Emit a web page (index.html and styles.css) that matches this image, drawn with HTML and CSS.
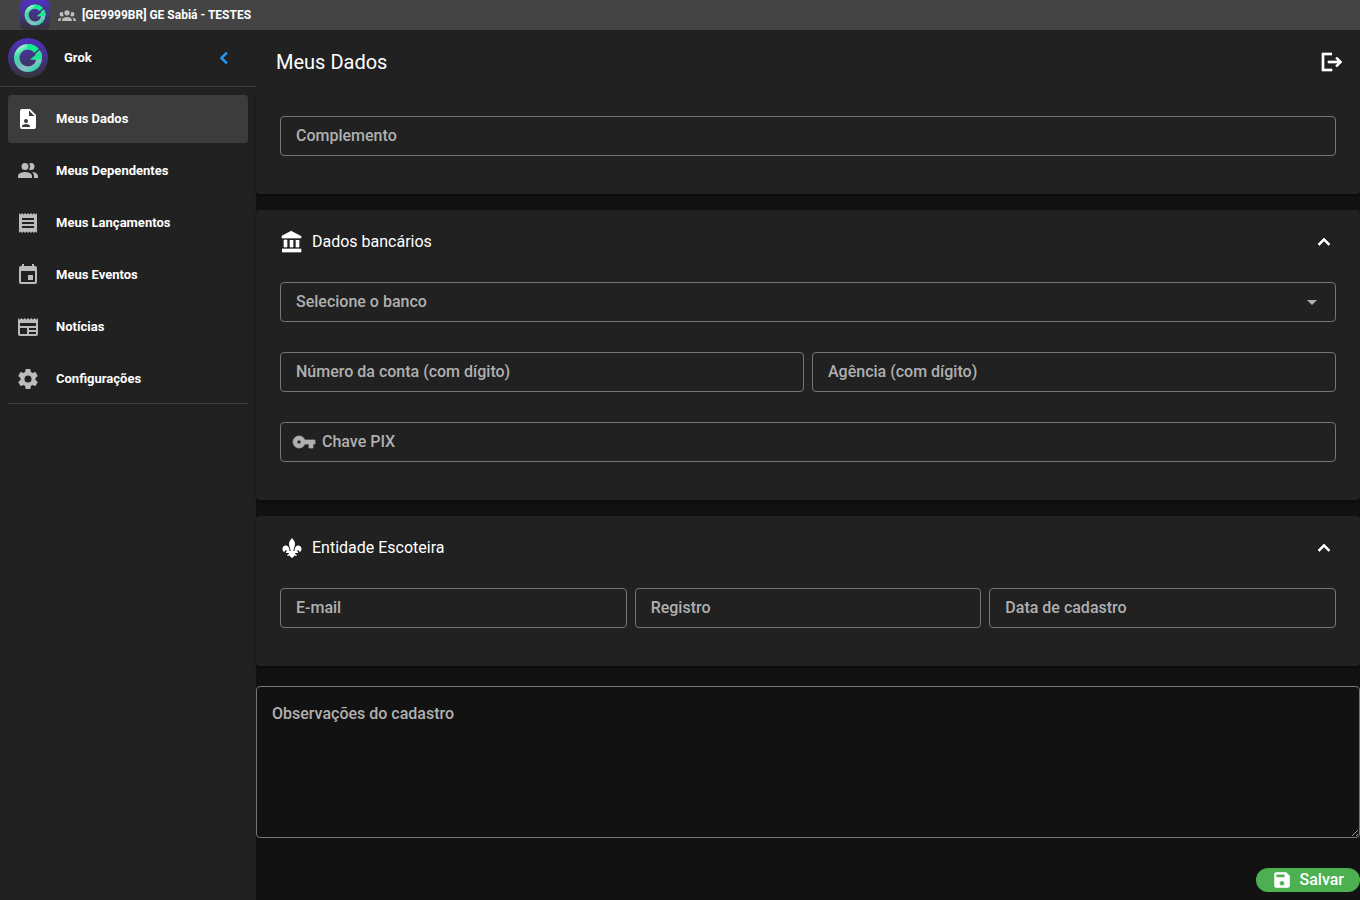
FILE: index.html
```html
<!DOCTYPE html>
<html lang="pt-BR">
<head>
    <meta charset="UTF-8">
    <meta name="viewport" content="width=device-width, initial-scale=1.0">
    <title>Meus Dados</title>
    <link rel="stylesheet" href="styles.css">
</head>
<body>
    <!-- Shared logo -->
    <svg class="defs" aria-hidden="true">
        <defs>
            <linearGradient id="logoBg" x1="0" y1="0" x2="0" y2="1">
                <stop offset="0" stop-color="#5030c0"/>
                <stop offset="0.5" stop-color="#43347f"/>
                <stop offset="1" stop-color="#343338"/>
            </linearGradient>
            <linearGradient id="logoRing" x1="0.1" y1="0.1" x2="0.7" y2="1">
                <stop offset="0" stop-color="#c8f5e6"/>
                <stop offset="0.25" stop-color="#3fe0a0"/>
                <stop offset="0.5" stop-color="#5cc5b0"/>
                <stop offset="0.75" stop-color="#8fc0cc"/>
                <stop offset="1" stop-color="#17dc9a"/>
            </linearGradient>
            <symbol id="logo" viewBox="0 0 40 40">
                <rect width="40" height="40" fill="url(#logoBg)"/>
                <path d="M20 6a14 14 0 1 0 0 28 14 14 0 0 0 0-28m0 5.500a8.500 8.500 0 1 1 0 17 8.500 8.500 0 0 1 0-17" fill="url(#logoRing)" fill-rule="evenodd"/>
                <path d="M19 6a14 14 0 0 1 12 5.500l-4.500 3.500a8 8 0 0 0-7-3.500z" fill="#0cf08c"/>
                <path d="M22 21.500 32.500 13q2 3.500 1.500 8l-6 1z" fill="#1ee596"/>
                <path d="M20 21 33 10" stroke="#40336f" stroke-width="1.500"/>
            </symbol>
        </defs>
    </svg>

    <header class="system-bar">
        <svg class="system-logo" aria-hidden="true"><use href="#logo"/></svg>
        <svg class="system-icon" viewBox="0 0 24 24" aria-hidden="true"><path d="M12 5.500A3.500 3.500 0 0 1 15.500 9 3.500 3.500 0 0 1 12 12.500 3.500 3.500 0 0 1 8.500 9 3.500 3.500 0 0 1 12 5.500M5 8C5.560 8 6.080 8.150 6.530 8.420 6.380 9.850 6.800 11.270 7.660 12.380 7.160 13.340 6.160 14 5 14A3 3 0 0 1 2 11 3 3 0 0 1 5 8M19 8A3 3 0 0 1 22 11 3 3 0 0 1 19 14C17.840 14 16.840 13.340 16.340 12.380 17.200 11.270 17.620 9.850 17.470 8.420 17.920 8.150 18.440 8 19 8M5.500 18.250C5.500 16.180 8.410 14.500 12 14.500S18.500 16.180 18.500 18.250V20H5.500V18.250M0 20V18.500C0 17.110 1.890 15.940 4.450 15.600 3.860 16.280 3.500 17.220 3.500 18.250V20H0M24 20H20.500V18.250C20.500 17.220 20.140 16.280 19.550 15.600 22.110 15.940 24 17.110 24 18.500V20Z"/></svg>
        <span>[GE9999BR] GE Sabiá - TESTES</span>
    </header>

    <div class="layout">
        <aside class="sidebar">
            <div class="profile">
                <svg class="avatar" aria-hidden="true"><use href="#logo"/></svg>
                <span class="profile-name">Grok</span>
                <button class="collapse-btn" type="button" aria-label="Recolher menu">
                    <svg class="icon bold" viewBox="0 0 24 24"><path d="M15.410 16.580 10.830 12l4.580-4.590L14 6l-6 6 6 6z"/></svg>
                </button>
            </div>
            <nav class="menu">
                <a class="menu-item active" href="#dados">
                    <svg class="icon" viewBox="0 0 24 24"><path d="M14 2H6a2 2 0 0 0-2 2v16a2 2 0 0 0 2 2h12a2 2 0 0 0 2-2V8zM10 12a2 2 0 1 1 0 4 2 2 0 0 1 0-4M14 20H6v-1c0-1.330 2.670-2 4-2s4 .670 4 2zM13 9V3.500L18.500 9z"/></svg>
                    <span>Meus Dados</span>
                </a>
                <a class="menu-item" href="#dependentes">
                    <svg class="icon" viewBox="0 0 24 24"><path d="M13.070 10.410a5 5 0 0 0 0-5.820A3.390 3.390 0 0 1 15 4a3.500 3.500 0 0 1 0 7 3.390 3.390 0 0 1-1.930-.59M5.500 7.500A3.500 3.500 0 1 1 9 11a3.500 3.500 0 0 1-3.500-3.500M16 17v2H2v-2s0-4 7-4 7 4 7 4m-.05-4A5.320 5.320 0 0 1 18 17v2h4v-2s0-3.630-6.060-4z"/></svg>
                    <span>Meus Dependentes</span>
                </a>
                <a class="menu-item" href="#lancamentos">
                    <svg class="icon" viewBox="0 0 24 24"><path d="M3 22l1.500-1.500L6 22l1.500-1.500L9 22l1.500-1.500L12 22l1.500-1.500L15 22l1.500-1.500L18 22l1.500-1.500L21 22V2l-1.500 1.500L18 2l-1.500 1.500L15 2l-1.500 1.500L12 2l-1.500 1.500L9 2 7.500 3.500 6 2 4.500 3.500 3 2M18 9H6V7h12m0 6H6v-2h12m0 6H6v-2h12z"/></svg>
                    <span>Meus Lançamentos</span>
                </a>
                <a class="menu-item" href="#eventos">
                    <svg class="icon" viewBox="0 0 24 24"><path d="M19 19H5V8h14m-3-7v2H8V1H6v2H5a2 2 0 0 0-2 2v14a2 2 0 0 0 2 2h14a2 2 0 0 0 2-2V5a2 2 0 0 0-2-2h-1V1m-1 11h-5v5h5z"/></svg>
                    <span>Meus Eventos</span>
                </a>
                <a class="menu-item" href="#noticias">
                    <svg class="icon" viewBox="0 0 24 24"><path d="M20 11H4V8h16m0 7h-7v-2h7m0 6h-7v-2h7m-9 2H4v-6h7m9.330-8.330L18.670 3 17 4.670 15.330 3l-1.660 1.670L12 3l-1.670 1.670L8.670 3 7 4.670 5.330 3 3.670 4.670 2 3v16a2 2 0 0 0 2 2h16a2 2 0 0 0 2-2V3z"/></svg>
                    <span>Notícias</span>
                </a>
                <a class="menu-item" href="#configuracoes">
                    <svg class="icon" viewBox="0 0 24 24"><path d="M12 15.500A3.500 3.500 0 0 1 8.500 12 3.500 3.500 0 0 1 12 8.500a3.500 3.500 0 0 1 3.500 3.500 3.500 3.500 0 0 1-3.500 3.500m7.430-2.530c.04-.32.07-.64.07-.97s-.03-.66-.07-1l2.110-1.630c.19-.15.24-.42.12-.64l-2-3.460c-.12-.22-.39-.31-.61-.22l-2.490 1c-.52-.39-1.060-.73-1.690-.98l-.37-2.650A.506.506 0 0 0 14 2h-4c-.25 0-.46.18-.5.42l-.37 2.650c-.63.25-1.170.59-1.690.98l-2.490-1c-.22-.09-.49 0-.61.22l-2 3.460c-.13.22-.07.49.12.64L4.570 11c-.04.34-.07.67-.07 1s.03.65.07.97l-2.110 1.660c-.19.15-.25.42-.12.64l2 3.460c.12.22.39.3.61.22l2.490-1.010c.52.4 1.060.74 1.690.99l.37 2.650c.04.24.25.42.5.42h4c.25 0 .46-.18.5-.42l.37-2.650c.63-.26 1.170-.59 1.690-.99l2.490 1.010c.22.08.49 0 .61-.22l2-3.460c.12-.22.07-.49-.12-.64z"/></svg>
                    <span>Configurações</span>
                </a>
            </nav>
        </aside>

        <main class="content">
            <div class="toolbar">
                <h1>Meus Dados</h1>
                <button class="icon-btn" type="button" aria-label="Sair">
                    <svg class="icon bold" viewBox="0 0 24 24"><path d="M12 3H2v18h10v-2H4V5h8M17 7l-1.400 1.400L18.200 11H8v2h10.200l-2.600 2.600L17 17l5-5z"/></svg>
                </button>
            </div>

            <form>
                <section class="card card-first">
                    <div class="fields">
                        <div class="field">
                            <label for="complemento">Complemento</label>
                            <input id="complemento" type="text">
                        </div>
                    </div>
                </section>

                <section class="card">
                    <div class="card-header">
                        <svg class="icon bold" viewBox="0 0 24 24"><path d="M11.500 1 2 6v2h19V6M16 10v7h3v-7M2 22h19v-3H2M10 10v7h3v-7M4 10v7h3v-7z"/></svg>
                        <h2>Dados bancários</h2>
                        <button class="icon-btn" type="button" aria-label="Recolher dados bancários">
                            <svg class="icon bold" viewBox="0 0 24 24"><path d="M7.410 15.410 12 10.830l4.590 4.580L18 14l-6-6-6 6z"/></svg>
                        </button>
                    </div>
                    <div class="fields">
                        <div class="field">
                            <label for="banco">Selecione o banco</label>
                            <select id="banco"><option value=""></option></select>
                            <svg class="icon" viewBox="0 0 24 24"><path d="m7 10 5 5 5-5z"/></svg>
                        </div>
                        <div class="field">
                            <label for="conta">Número da conta (com dígito)</label>
                            <input id="conta" type="text">
                        </div>
                        <div class="field">
                            <label for="agencia">Agência (com dígito)</label>
                            <input id="agencia" type="text">
                        </div>
                        <div class="field field-icon">
                            <svg class="icon bold" viewBox="0 0 24 24"><path d="M7 14a2 2 0 0 1-2-2 2 2 0 0 1 2-2 2 2 0 0 1 2 2 2 2 0 0 1-2 2m5.650-4A5.990 5.990 0 0 0 7 6a6 6 0 0 0-6 6 6 6 0 0 0 6 6 5.990 5.990 0 0 0 5.650-4H17v4h4v-4h2v-4z"/></svg>
                            <label for="pix">Chave PIX</label>
                            <input id="pix" type="text">
                        </div>
                    </div>
                </section>

                <section class="card">
                    <div class="card-header">
                        <svg class="icon" viewBox="0 0 24 24"><path d="M12 2c-1.500 2-3 3.500-3 6 0 2.500 1.300 4 1.700 7H9.500c0-3-1.300-5.500-3.700-5.500-2 0-3.300 1.500-3.300 3.500 0 1.500.8 2.800 2 3.300 0-1.300.5-2.100 1.300-2.100.7 0 1.200.5 1.200 1.300H6V17h3c-.2 1-1 1.800-2.200 2 .7.900 1.900 1 2.900.6.300 1.200 1.300 1.800 2.300 2.400 1-.6 2-1.200 2.300-2.400 1 .4 2.200.3 2.900-.6-1.200-.2-2-1-2.200-2h3v-1.500h-1c0-.8.500-1.300 1.200-1.300.8 0 1.300.8 1.300 2.100 1.200-.5 2-1.800 2-3.300 0-2-1.300-3.500-3.300-3.500-2.400 0-3.700 2.500-3.700 5.500h-1.200c.4-3 1.700-4.500 1.700-7 0-2.500-1.500-4-3-6"/></svg>
                        <h2>Entidade Escoteira</h2>
                        <button class="icon-btn" type="button" aria-label="Recolher entidade escoteira">
                            <svg class="icon bold" viewBox="0 0 24 24"><path d="M7.410 15.410 12 10.830l4.590 4.580L18 14l-6-6-6 6z"/></svg>
                        </button>
                    </div>
                    <div class="fields fields-3">
                        <div class="field">
                            <label for="email">E-mail</label>
                            <input id="email" type="email">
                        </div>
                        <div class="field">
                            <label for="registro">Registro</label>
                            <input id="registro" type="text">
                        </div>
                        <div class="field">
                            <label for="cadastro">Data de cadastro</label>
                            <input id="cadastro" type="text">
                        </div>
                    </div>
                </section>

                <div class="notes">
                    <label for="observacoes">Observações do cadastro</label>
                    <textarea id="observacoes"></textarea>
                </div>

                <div class="actions">
                    <button class="save-btn" type="submit">
                        <svg class="icon-sm bold" viewBox="0 0 24 24"><path d="M15 9H5V5h10m-3 14a3 3 0 1 1 0-6 3 3 0 0 1 0 6m5-16H5a2 2 0 0 0-2 2v14a2 2 0 0 0 2 2h14a2 2 0 0 0 2-2V7z"/></svg>
                        Salvar
                    </button>
                </div>
            </form>
        </main>
    </div>
</body>
</html>
```
FILE: styles.css
```css
* {
    box-sizing: border-box;
}
body {
    margin: 0;
    min-height: 100vh;
    display: flex;
    flex-direction: column;
    background: #121212;
    color: white;
    font-family: Roboto, sans-serif;
    font-size: 16px;
    line-height: 24px;
    color-scheme: dark;
}
svg {
    fill: currentColor;
    flex: none;
}
button {
    border: none;
    padding: 0;
    background: none;
    color: inherit;
    font: inherit;
    cursor: pointer;
}
h1, h2 {
    margin: 0;
}
.defs {
    position: absolute;
    width: 0;
    height: 0;
}
.icon {
    width: 24px;
    height: 24px;
}
.icon-sm {
    width: 20px;
    height: 20px;
}
.bold {
    stroke: currentColor;
    stroke-width: 0.7;
}
.system-bar {
    display: flex;
    align-items: center;
    height: 30px;
    padding-left: 20px;
    background: #444444;
    font-size: 12px;
    font-weight: 700;
}
.system-logo {
    width: 30px;
    height: 30px;
    border-radius: 5px;
}
.system-icon {
    width: 18px;
    height: 18px;
    margin: 0 6px 0 8px;
    color: #bdbdbd;
}
.layout {
    display: flex;
    flex: 1;
}
.sidebar {
    width: 256px;
    flex: none;
    background: #212121;
    font-size: 13px;
    font-weight: 700;
}
.profile {
    display: flex;
    align-items: center;
    height: 57px;
    padding: 0 20px 0 8px;
    border-bottom: 1px solid #3c3c3c;
}
.avatar {
    width: 40px;
    height: 40px;
    margin-right: 16px;
    border-radius: 50%;
}
.profile-name {
    flex: 1;
}
.collapse-btn {
    display: flex;
    color: #2196f3;
}
.menu {
    display: flex;
    flex-direction: column;
    gap: 4px;
    margin: 8px 8px 0;
    border-bottom: 1px solid #3c3c3c;
}
.menu-item {
    display: flex;
    align-items: center;
    gap: 16px;
    height: 48px;
    padding: 0 8px;
    border-radius: 4px;
    color: white;
    text-decoration: none;
}
.menu-item .icon {
    color: #bcbcbc;
}
.menu-item.active {
    background: #3c3c3c;
}
.menu-item.active .icon {
    color: white;
}
.content {
    flex: 1;
    min-width: 0;
}
.toolbar {
    display: flex;
    align-items: center;
    justify-content: space-between;
    height: 64px;
    padding: 0 16px 0 20px;
    background: #212121;
}
.toolbar h1 {
    font-size: 20px;
    font-weight: 400;
}
.icon-btn {
    display: flex;
}
.card {
    margin-bottom: 16px;
    padding-bottom: 8px;
    border-radius: 4px;
    background: #212121;
    box-shadow: 0 2px 4px rgba(0, 0, 0, 0.4);
}
.card-first {
    padding-top: 14px;
    border-radius: 0 0 4px 4px;
}
.card-header {
    display: flex;
    align-items: center;
    gap: 8px;
    height: 64px;
    padding: 0 24px;
}
.card-header h2 {
    flex: 1;
    font-size: 16px;
    font-weight: 400;
}
.fields {
    display: grid;
    grid-template-columns: repeat(2, 1fr);
    gap: 30px 8px;
    padding: 8px 24px 30px;
}
.fields-3 {
    grid-template-columns: repeat(3, 1fr);
}
.field {
    display: flex;
    align-items: center;
    min-width: 0;
    height: 40px;
    padding: 0 11px 0 15px;
    border: 1px solid #757575;
    border-radius: 4px;
    color: #b0b0b0;
}
.field label,
.notes label {
    font-weight: 500;
}
.field:only-child,
.field:has(select),
.field-icon {
    grid-column: 1 / -1;
}
.field-icon {
    gap: 6px;
    padding-left: 11px;
}
.field input,
.field select,
.notes textarea {
    flex: 1;
    min-width: 0;
    border: none;
    outline: none;
    background: transparent;
    color: white;
    font: inherit;
    appearance: none;
}
.field:focus-within,
.notes:focus-within {
    border-color: white;
}
.notes {
    display: flex;
    flex-direction: column;
    margin-top: 20px;
    border: 1px solid #757575;
    border-radius: 4px;
    color: #b0b0b0;
}
.notes label {
    padding: 15px 15px 0;
}
.notes textarea {
    flex: none;
    height: 111px;
    padding: 0 15px;
    resize: vertical;
}
.actions {
    display: flex;
    justify-content: flex-end;
    padding: 30px 0 8px;
}
.save-btn {
    display: flex;
    align-items: center;
    gap: 8px;
    height: 24px;
    padding: 0 16px;
    border-radius: 12px;
    background: #4caf50;
    font-weight: 500;
}
```
